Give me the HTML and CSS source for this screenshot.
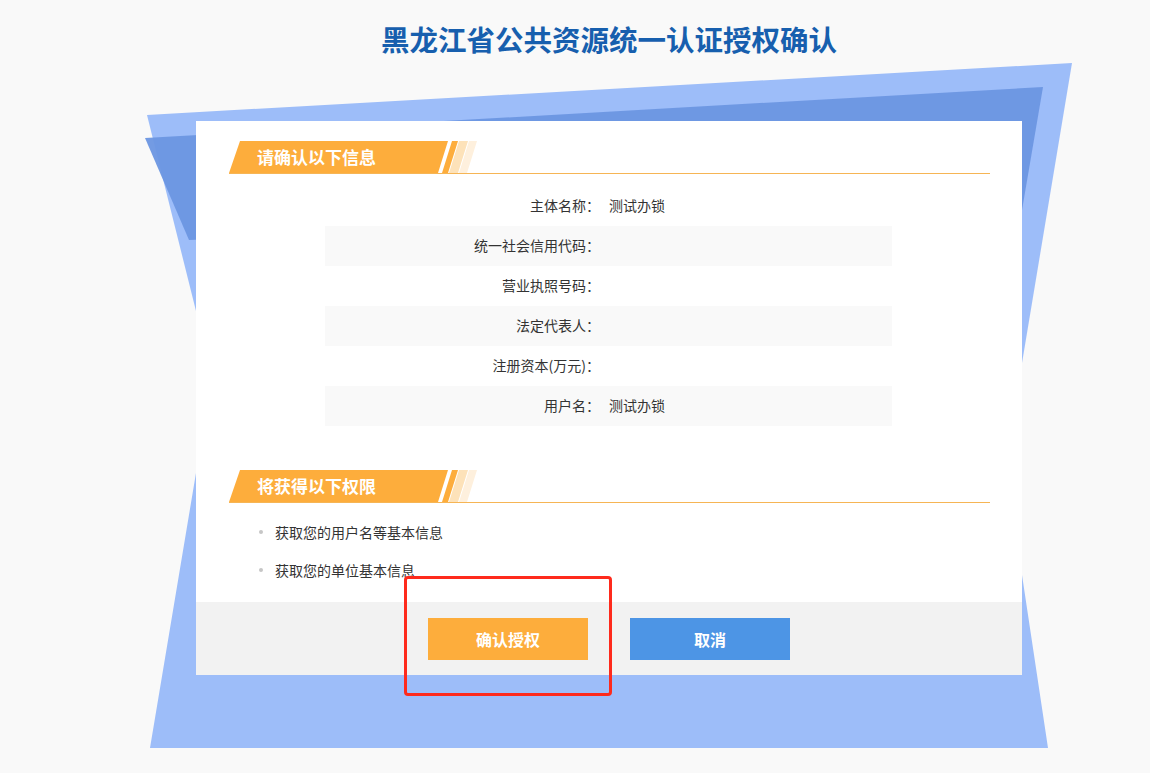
FILE: index.html
```html
<!DOCTYPE html>
<html lang="zh-CN">

<head>
    <meta charset="UTF-8" />
    <meta name="viewport" content="width=device-width, initial-scale=1.0" />
    <title>统一认证授权确认</title>
    <link rel="stylesheet" href="styles.css">
</head>

<body>
    <svg class="bg-shapes" width="1150" height="773" viewBox="0 0 1150 773">
        <polygon points="147,115 1072,63 1022,363 196,311" fill="#9dbdf9" />
        <polygon points="145,138 1043,87 1022,210 189,240" fill="#6b96e1" fill-opacity="0.95" />
        <polygon points="196,473 1022,473 1022,575 1048,748 150,748" fill="#9dbdf9" />
    </svg>
    <div class="page">
        <h1 class="title">黑龙江省公共资源统一认证授权确认</h1>
        <div class="card">
            <div class="card-body">
                <div class="sec-head">
                    <div class="sec-tag">请确认以下信息</div>
                    <span class="stripe stripe-1"></span>
                    <span class="stripe stripe-2"></span>
                    <span class="stripe stripe-3"></span>
                </div>
                <div class="info">
                    <div class="info-row"><span class="info-label">主体名称：</span><span class="info-value">测试办锁</span></div>
                    <div class="info-row"><span class="info-label">统一社会信用代码：</span><span class="info-value"></span></div>
                    <div class="info-row"><span class="info-label">营业执照号码：</span><span class="info-value"></span></div>
                    <div class="info-row"><span class="info-label">法定代表人：</span><span class="info-value"></span></div>
                    <div class="info-row"><span class="info-label">注册资本(万元)：</span><span class="info-value"></span></div>
                    <div class="info-row"><span class="info-label">用户名：</span><span class="info-value">测试办锁</span></div>
                </div>
                <div class="sec-head sec-head-2">
                    <div class="sec-tag">将获得以下权限</div>
                    <span class="stripe stripe-1"></span>
                    <span class="stripe stripe-2"></span>
                    <span class="stripe stripe-3"></span>
                </div>
                <ul class="perm-list">
                    <li><span class="dot"></span>获取您的用户名等基本信息</li>
                    <li><span class="dot"></span>获取您的单位基本信息</li>
                </ul>
            </div>
            <div class="card-foot">
                <div class="btn btn-ok">确认授权</div>
                <div class="btn btn-cancel">取消</div>
            </div>
        </div>
        <div class="mark"></div>
    </div>
</body>

</html>
```

FILE: styles.css
```css
body,
html {
    margin: 0;
    padding: 0;
    height: 100%;
    overflow: hidden;
    background-color: #f9f9f9;
}
body {
    position: relative;
    font-family: "Microsoft YaHei", "Noto Sans CJK SC", "Noto Sans", sans-serif;
    color: #333;
}

.bg-shapes {
    position: absolute;
    left: 0;
    top: 0;
    z-index: 0;
}

.page {
    position: relative;
    z-index: 1;
    width: 826px;
    margin-left: 196px;
}

.title {
    margin: 0;
    padding-top: 19px;
    height: 41px;
    line-height: 40px;
    text-align: center;
    font-size: 28.5px;
    font-weight: bold;
    color: #175fae;
}

.card {
    margin-top: 61px;
    background-color: #fff;
}

.card-body {
    padding: 20px 32px 13px 33px;
}

.sec-head {
    display: flex;
    height: 32px;
    border-bottom: 1px solid #f6b555;
}
.sec-head-2 {
    margin-top: 44px;
}

.sec-tag {
    width: 191px;
    padding-left: 28px;
    line-height: 32px;
    font-size: 17px;
    font-weight: bold;
    color: #fff;
    background-color: #fdad3c;
    clip-path: polygon(11px 0, 100% 0, calc(100% - 10px) 100%, 0 100%);
}

.stripe {
    display: block;
    height: 32px;
}
.stripe-1 {
    width: 16px;
    margin-left: -6px;
    background-color: #fdad3c;
    clip-path: polygon(10px 0, 16px 0, 6px 100%, 0 100%);
}
.stripe-2 {
    width: 19px;
    margin-left: -9px;
    background-color: #fde2b9;
    clip-path: polygon(10px 0, 19px 0, 9px 100%, 0 100%);
}
.stripe-3 {
    width: 18px;
    margin-left: -9px;
    background-color: #fef0dd;
    clip-path: polygon(10px 0, 18px 0, 8px 100%, 0 100%);
}

.info {
    width: 567px;
    margin: 12px 0 0 96px;
    font-size: 14px;
}
.info-row {
    display: flex;
    height: 40px;
    line-height: 39px;
}
.info-row:nth-child(2n) {
    background-color: #f9f9f9;
}
.info-label {
    width: 275px;
    text-align: right;
}
.info-value {
    padding-left: 9px;
}

.perm-list {
    list-style: none;
    margin: 10px 0 0;
    padding: 0;
    font-size: 14px;
}
.perm-list li {
    display: flex;
    align-items: center;
    height: 38px;
    padding-left: 30px;
}
.perm-list .dot {
    width: 4px;
    height: 4px;
    border-radius: 50%;
    background-color: #c6c6c6;
    margin-right: 12px;
}

.card-foot {
    display: flex;
    justify-content: center;
    gap: 42px;
    height: 73px;
    padding-top: 16px;
    box-sizing: border-box;
    background-color: #f2f2f2;
}

.btn {
    width: 160px;
    height: 42px;
    line-height: 42px;
    text-align: center;
    font-size: 16px;
    font-weight: bold;
    color: #fff;
    cursor: pointer;
}
.btn-ok {
    background-color: #fdad3c;
}
.btn-cancel {
    background-color: #4d95e5;
}

.mark {
    position: absolute;
    left: 208px;
    top: 576px;
    width: 208px;
    height: 120px;
    box-sizing: border-box;
    border: 3px solid #fe2a1c;
    border-radius: 4px;
}
```
